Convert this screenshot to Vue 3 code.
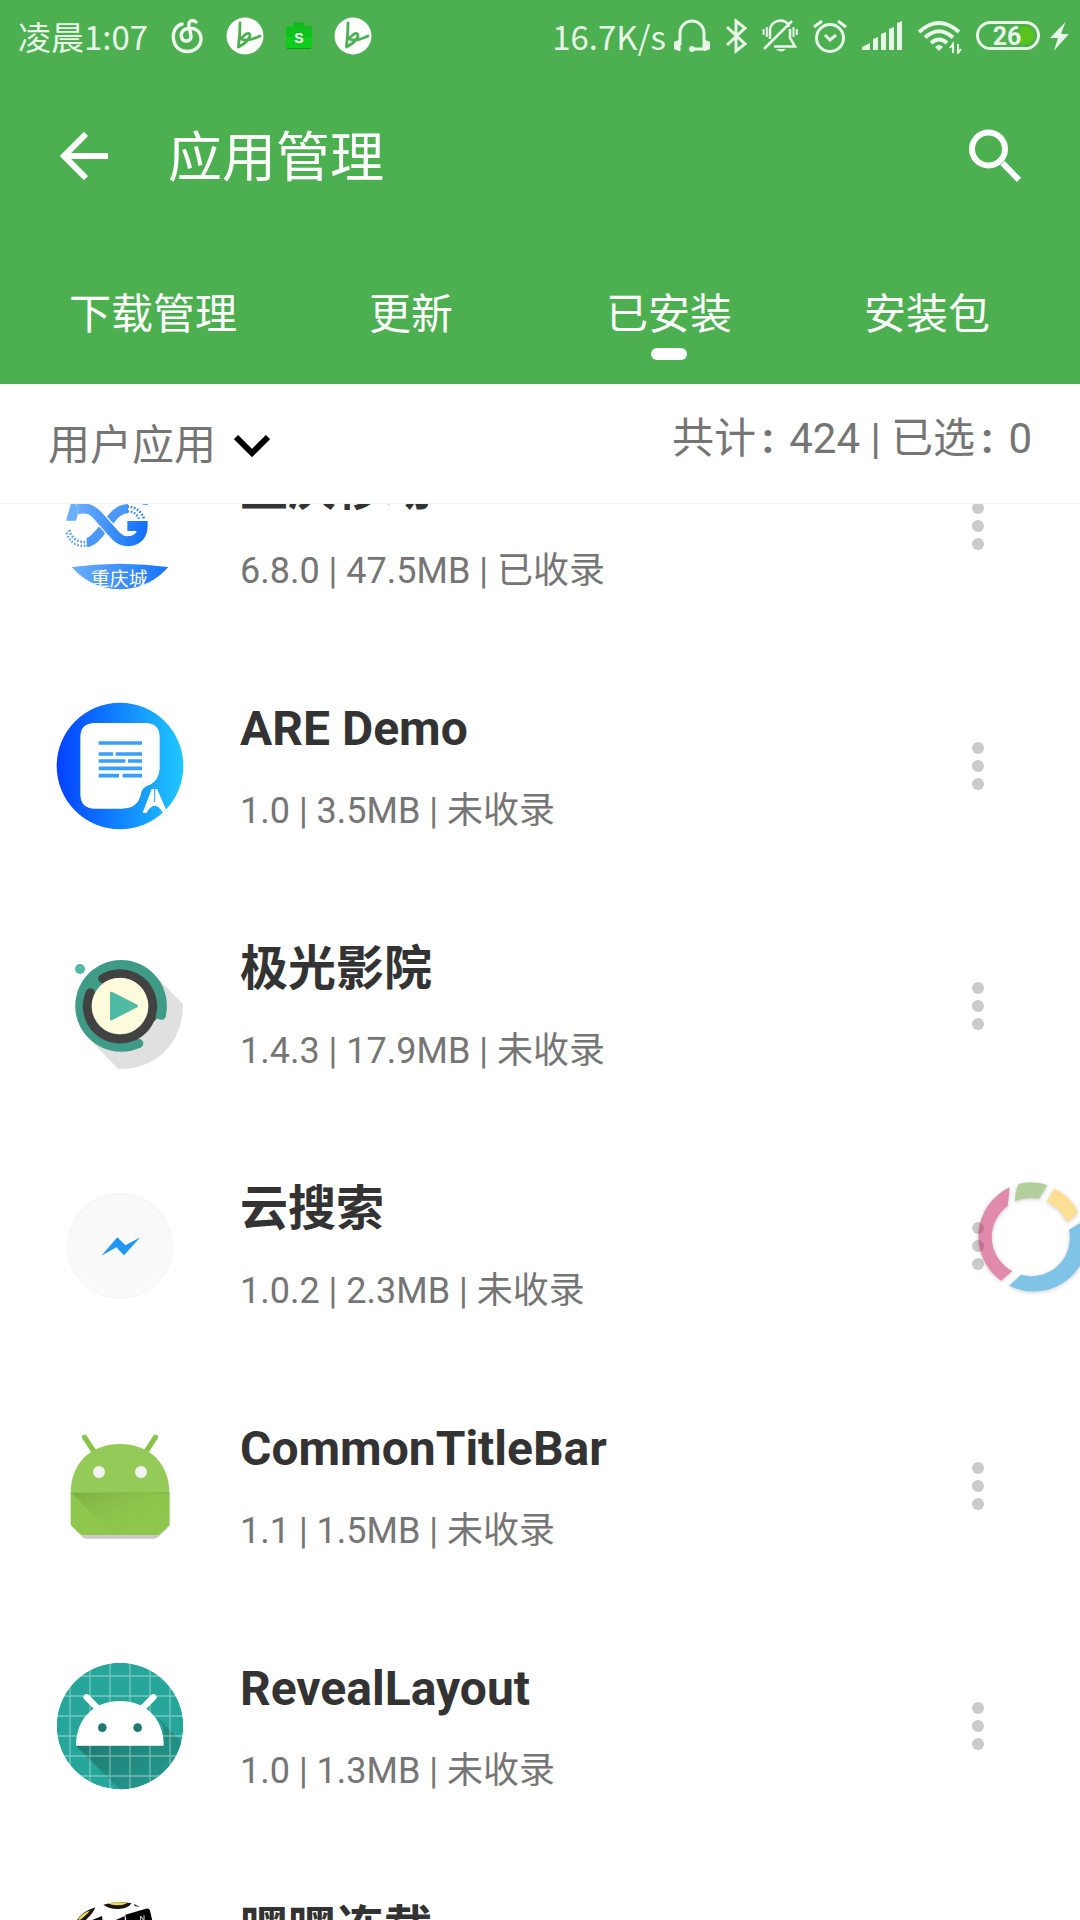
<script setup>
import { ref, onMounted } from 'vue'

const tabs = ['下载管理', '更新', '已安装', '安装包']
const active = ref(2)
const filter = ref('用户应用')
const list = ref(null)

const apps = [
  { id: 'cq', name: '重庆移动', meta: '6.8.0 | 47.5MB | 已收录' },
  { id: 'are', name: 'ARE Demo', meta: '1.0 | 3.5MB | 未收录' },
  { id: 'cinema', name: '极光影院', meta: '1.4.3 | 17.9MB | 未收录' },
  { id: 'search', name: '云搜索', meta: '1.0.2 | 2.3MB | 未收录' },
  { id: 'bar', name: 'CommonTitleBar', meta: '1.1 | 1.5MB | 未收录' },
  { id: 'reveal', name: 'RevealLayout', meta: '1.0 | 1.3MB | 未收录' },
  { id: 'comic', name: '嘿嘿连载', meta: '1.0 | 6.2MB | 未收录' },
]

// The list opens part-way through its first row.
onMounted(() => {
  list.value.scrollTop = 98
})
</script>

<template>
  <div class="page">
    <header class="header">
      <div class="status">
        <div class="status-side">
          <span class="clock">凌晨1:07</span>
          <svg width="34" height="36" viewBox="0 0 34 36" fill="none" stroke="#eef8ee" stroke-width="3.4" stroke-linecap="round">
            <path d="M12 6C5 8 2.500 15 3.500 21C4.500 29 10 33.500 17 33.500C25 33.500 31 28 31 21C31 13 25 9.500 18 10.500C13 11 10.500 15 11.500 19C13 25 21.500 24 21 18L19 8C18 3 22 1 26 4" />
          </svg>
          <svg width="38" height="38" viewBox="0 0 38 38">
            <circle cx="19" cy="19" r="18.500" fill="#fff" />
            <path d="M14 6Q14 18 12.500 29M12.500 30Q22 25 24 19Q24 15 20 17L13 23M15 22Q22 25 34 19" fill="none" stroke="#4caf50" stroke-width="2.800" stroke-linecap="round" stroke-linejoin="round" />
          </svg>
          <svg class="bag" width="26" height="28" viewBox="0 0 26 28">
            <path d="M9 5V2h8v3" fill="none" stroke="#10b81c" stroke-width="3" />
            <rect y="4" width="26" height="23" rx="2" fill="#10cc1c" />
            <rect y="4" width="26" height="11" rx="2" fill="#10c01c" />
            <rect x="1" y="26" width="24" height="1" fill="#0aa014" />
            <text x="13" y="21" text-anchor="middle" font-family="Liberation Sans, sans-serif" font-weight="700" font-size="14" fill="#fff">S</text>
          </svg>
          <svg width="38" height="38" viewBox="0 0 38 38">
            <circle cx="19" cy="19" r="18.500" fill="#fff" />
            <path d="M14 6Q14 18 12.500 29M12.500 30Q22 25 24 19Q24 15 20 17L13 23M15 22Q22 25 34 19" fill="none" stroke="#4caf50" stroke-width="2.800" stroke-linecap="round" stroke-linejoin="round" />
          </svg>
        </div>
        <div class="status-side right">
          <span class="speed">16.7K/s</span>
          <svg width="36" height="36" viewBox="0 0 36 36" fill="none" stroke="#e8f6e9" stroke-width="3">
            <path d="M6 27V15a12 12 0 0 1 24 0v16H18" />
            <path d="M5 22v11M31 22v11" stroke-width="3" />
            <rect x="0" y="23" width="6" height="9" rx="2" fill="#e8f6e9" stroke="none" />
            <rect x="30" y="23" width="6" height="9" rx="2" fill="#e8f6e9" stroke="none" />
            <circle cx="18" cy="31" r="3" fill="#e8f6e9" stroke="none" />
          </svg>
          <svg width="24" height="36" viewBox="0 0 24 36" fill="none" stroke="#e8f6e9" stroke-width="3">
            <path d="M3 9L21 26L12 33V3L21 10L3 27" />
          </svg>
          <svg width="36" height="36" viewBox="0 0 36 36" fill="none" stroke="#e8f6e9" stroke-width="2.600">
            <path d="M8 21V13C8 1 25 -1 27 9M28 11V20L33 28.500H12M2 31L30 3" />
            <path d="M1.500 11v6M4.800 9v10M31.500 9v10M34.800 11v6" stroke-width="2" />
            <path d="M14 31h10q-5 5-10 0z" fill="#e8f6e9" stroke="none" />
          </svg>
          <svg width="36" height="36" viewBox="0 0 36 36" fill="none" stroke="#e8f6e9" stroke-width="3">
            <circle cx="18" cy="20" r="13.500" />
            <path d="M13 17l5 5 6-5M2 9l8-6M26 3l8 6" />
          </svg>
          <svg width="40" height="36" viewBox="0 0 40 36" fill="#e8f6e9">
            <path d="M0 32v-3l8-4v7zM11 32V21l5-2v13zM19 32V16l5-2v18zM27 32V11l5-2v23zM35 32V5l5-2v29z" />
          </svg>
          <svg width="46" height="36" viewBox="0 0 46 36" fill="none" stroke="#e8f6e9" stroke-width="4">
            <path d="M3 14Q23-4 43 14M9 19.500Q23 7 37 19.500M15 25Q23 18 31 25" />
            <path d="M19 29q4-4 8 0l-4 4z" fill="#e8f6e9" stroke="none" />
            <path d="M37 35V26l-3 4M42 26v9l3-4" stroke-width="2" />
          </svg>
          <div class="power">
            <svg width="64" height="36" viewBox="0 0 64 36">
              <rect x="1.500" y="4.500" width="61" height="26" rx="13" fill="none" stroke="#e8f6e9" stroke-width="3" />
              <path d="M44 8.500h5a9 9 0 0 1 0 18h-5z" fill="#58c41a" />
              <text x="31" y="27" text-anchor="middle" font-family="Roboto, sans-serif" font-weight="700" font-size="25" fill="#e8f6e9">26</text>
            </svg>
            <svg width="20" height="36" viewBox="0 0 20 36" fill="#e8f6e9">
              <path d="M15.500 4L0 20h8L4 32.500L19 16h-8z" />
            </svg>
          </div>
        </div>
      </div>

      <div class="toolbar">
        <button class="icon-btn" aria-label="返回">
          <svg width="48" height="48" viewBox="0 0 48 48" fill="none" stroke="#fff" stroke-width="6">
            <path d="M26 2L4 24L26 46M4 24H48" />
          </svg>
        </button>
        <h1>应用管理</h1>
        <button class="icon-btn" aria-label="搜索">
          <svg width="52" height="54" viewBox="0 0 52 54" fill="none" stroke="#fff" stroke-width="6">
            <circle cx="19.500" cy="20" r="16.500" />
            <path d="M33.500 34L50 51" />
          </svg>
        </button>
      </div>

      <nav class="tabs">
        <button v-for="(t, i) in tabs" :key="t" :class="['tab', { active: i === active }]" @click="active = i">{{ t }}</button>
      </nav>
    </header>

    <div class="filter">
      <label class="picker">
        <select v-model="filter" aria-label="应用类型">
          <option>用户应用</option>
          <option>系统应用</option>
        </select>
        <svg width="36" height="24" viewBox="0 0 36 24" fill="none" stroke="#000" stroke-width="6">
          <path d="M2 3L18 19L34 3" />
        </svg>
      </label>
      <p class="stats">共计<span class="colon">:</span> 424 | 已选<span class="colon">:</span> 0</p>
    </div>

    <ul ref="list" class="list">
      <li v-for="app in apps" :key="app.id" class="row">
        <svg class="app-icon" viewBox="48 36 384 384">
          <template v-if="app.id === 'cq'">
            <defs>
              <linearGradient id="cqGrad"><stop offset="0" stop-color="#6aaefc" /><stop offset="1" stop-color="#1672fb" /></linearGradient>
              <clipPath id="cqClip"><circle cx="240" cy="228" r="190" /></clipPath>
            </defs>
            <path d="M96 150H142L134 182H116L108 212H78Z" fill="#6aaefc" />
            <g fill="none" stroke-width="30">
              <path d="M88 240C98 282 150 290 178 250" stroke="#5aa2fa" stroke-dasharray="5 5" stroke-width="8" />
              <path d="M80 248C94 296 146 300 178 262" stroke="#5aa2fa" stroke-dasharray="5 5" stroke-width="7" />
              <path d="M140 277C158 277 172 256 186 240L214 206C226 190 240 176 264 176" stroke="#4c98fa" stroke-width="28" />
              <path d="M262 170C286 170 306 184 312 208" stroke="#3a88fa" stroke-dasharray="5 5" stroke-width="8" />
              <path d="M262 184C280 184 292 192 298 210" stroke="#3a88fa" stroke-dasharray="5 5" stroke-width="7" />
              <path d="M112 178C146 170 160 182 176 200L226 256C252 286 308 278 308 226H262" stroke="#fff" stroke-width="38" />
              <path d="M112 178C146 170 160 182 176 200L226 256C252 286 308 278 308 228H262" stroke="url(#cqGrad)" />
            </g>
            <path d="M308 150h16v14h-16z" fill="#1672fb" />
            <g clip-path="url(#cqClip)">
              <path d="M90 352Q240 330 390 352V420H90Z" fill="url(#cqGrad)" />
              <text x="238" y="408" text-anchor="middle" font-size="57" font-family="Noto Sans CJK SC, sans-serif" fill="#fff">重庆城</text>
            </g>
          </template>

          <template v-else-if="app.id === 'are'">
            <defs>
              <linearGradient id="areGrad"><stop offset="0" stop-color="#0341ff" /><stop offset="1" stop-color="#20c8ff" /></linearGradient>
              <clipPath id="areClip"><circle cx="240" cy="228" r="190" /></clipPath>
            </defs>
            <circle cx="240" cy="228" r="190" fill="url(#areGrad)" />
            <path d="M165 99H316Q359 99 359 142V236Q356 272 330 284C306 292 304 304 302 316Q292 356 246 356H165Q121 356 121 312V142Q121 99 165 99Z" fill="#fff" />
            <path d="M176 159H306M176 192H219M227 192H306M176 213H256M264 213H306M176 235H306M176 257H237M248 257H306" fill="none" stroke="#389ff8" stroke-width="11" />
            <g clip-path="url(#areClip)">
              <path d="M335 297H351L380 362L368 368Q345 326 319 369L308 368Z" fill="#fff" />
              <path d="M344 297V336" stroke="#20a0ff" stroke-width="3" />
            </g>
          </template>

          <template v-else-if="app.id === 'cinema'">
            <path d="M356 148L429 222Q430 310 370 370Q310 420 235 417L160 340Z" fill="#e0e0e0" />
            <circle cx="120" cy="117" r="15" fill="#4fbba4" />
            <circle cx="240" cy="228" r="126" fill="#409b86" />
            <path d="M240 228L352 268L292 334Z" fill="#424242" />
            <path d="M364 256A124 124 0 1 0 296 340" fill="none" stroke="#409b86" stroke-width="27" stroke-linecap="round" />
            <path d="M350 266L372 268L330 330L306 334L292 324Z" fill="#e0e0e0" />
            <path d="M364 240V256M280 344L296 340" stroke="#409b86" stroke-width="27" stroke-linecap="round" />
            <path d="M188 146A98 98 0 1 1 151 188" fill="none" stroke="#424242" stroke-width="27" stroke-linecap="round" />
            <circle cx="240" cy="228" r="85" fill="#fffbdc" />
            <path d="M214 189L290 228L214 267Z" fill="#4fbba4" stroke="#4fbba4" stroke-width="8" stroke-linejoin="round" />
          </template>

          <template v-else-if="app.id === 'search'">
            <circle cx="240" cy="228" r="156" fill="#fafafa" stroke="#f5f5f5" stroke-width="4" />
            <path d="M184 257L232 202L256 226L301 202L252 256L229 232Z" fill="#2196f3" />
          </template>

          <template v-else-if="app.id === 'bar'">
            <defs>
              <linearGradient id="botShade" x1="0" y1="0" x2="1" y2="1"><stop offset="0" stop-color="#7cae42" /><stop offset="0.700" stop-color="#8bc34a" stop-opacity="0" /></linearGradient>
            </defs>
            <path d="M93 345L128 382Q130 386 140 386H340Q350 386 356 380L388 345Z" fill="#c9c9c9" />
            <path d="M134 82L166 131M346 82L314 131" stroke="#8bc34a" stroke-width="16" stroke-linecap="round" />
            <path d="M92 249C92 158 154 102 240 102S388 158 388 249Z" fill="#94ca58" />
            <path d="M92 249H389V345Q378 360 356 375H124Q108 362 92 345Z" fill="#8fc74e" />
            <path d="M94 249H387L387 330L340 375H220Z" fill="url(#botShade)" />
            <path d="M92 249H389" stroke="#7fb544" stroke-width="3" />
            <circle cx="177" cy="186" r="18" fill="#f3f3f3" />
            <circle cx="303" cy="186" r="18" fill="#f3f3f3" />
          </template>

          <template v-else-if="app.id === 'reveal'">
            <defs>
              <clipPath id="revClip"><circle cx="240" cy="228" r="190" /></clipPath>
              <linearGradient id="revShade" x1="0" y1="0" x2="1" y2="1"><stop offset="0" stop-color="#1c7168" /><stop offset="1" stop-color="#26a69a" /></linearGradient>
            </defs>
            <g clip-path="url(#revClip)">
              <circle cx="240" cy="228" r="190" fill="#26a69a" />
              <path d="M108 287H371V230L350 200L470 320V460H280Z" fill="url(#revShade)" />
              <path d="M90 30V430M150 30V430M210 30V430M270 30V430M330 30V430M390 30V430M40 78H440M40 138H440M40 198H440M40 258H440M40 318H440M40 378H440" stroke="#fff" stroke-opacity="0.380" stroke-width="4" />
            </g>
            <path d="M140 142L176 178M340 142L304 178" stroke="#fff" stroke-width="19" stroke-linecap="round" />
            <path d="M108 287C108 204 164 153 240 153S371 204 371 287Z" fill="#fff" />
            <circle cx="187" cy="233" r="13" fill="#21786f" />
            <circle cx="293" cy="233" r="13" fill="#21786f" />
          </template>

          <template v-else>
            <path d="M190 44Q232 32 275 40Q262 58 232 57Q208 57 190 44Z" fill="#1c140c" />
            <path d="M204 40Q232 34 264 38Q250 46 230 46Q214 46 204 40Z" fill="#ecd95c" />
            <path d="M110 92Q124 66 166 52Q160 72 126 100Z" fill="#1c140c" />
            <path d="M114 88Q126 68 150 62Q140 74 120 90Z" fill="#ecd95c" />
            <path d="M282 42L300 51L284 48Z" fill="#111" />
            <path d="M146 94L186 78L190 110H150ZM214 96L254 78L256 112H214Z" fill="#111" />
            <path d="M256 74L318 56Q328 54 330 62L346 130H266Z" fill="#000" />
            <path d="M302 92V78L312 92V76" stroke="#ddd" stroke-width="3" fill="none" />
          </template>
        </svg>

        <div class="info">
          <h2>{{ app.name }}</h2>
          <p>{{ app.meta }}</p>
        </div>

        <button class="more" aria-label="更多">
          <i></i><i></i><i></i>
        </button>
      </li>
    </ul>

    <svg class="ring" viewBox="115 64 330 330">
      <path d="M213 80A163 163 0 0 0 187 360L221 331A115 115 0 0 1 207 136Z" fill="#c2185b" />
      <path d="M240 70A163 163 0 0 1 326 73L301 115A115 115 0 0 0 229 122Q229 92 240 70Z" fill="#689f38" />
      <path d="M348 84A163 163 0 0 1 417 150Q408 172 385 184A115 115 0 0 0 323 123Z" fill="#fbc02d" />
      <path d="M212 375L247 342A115 115 0 0 0 391 207L440 178A163 163 0 0 1 212 375Z" fill="#0288d1" />
    </svg>
  </div>
</template>

<style>
body {
  margin: 0;
}
</style>

<style scoped>
.page {
  position: relative;
  display: flex;
  flex-direction: column;
  height: 100vh;
  overflow: hidden;
  background: #fff;
  font-family: Roboto, "Noto Sans CJK SC", sans-serif;
}

svg {
  display: block;
  flex: none;
}

button {
  padding: 0;
  border: 0;
  background: none;
  font: inherit;
  color: inherit;
}

h1,
h2,
p {
  margin: 0;
}

.header {
  flex: none;
  background: #4caf50;
  color: #fff;
}

.status {
  display: flex;
  justify-content: space-between;
  height: 72px;
  padding: 0 10px 0 18px;
  font-family: "Noto Sans CJK SC", sans-serif;
  font-size: 33px;
  line-height: 72px;
  color: #e8f6e9;
}

.status-side {
  display: flex;
  align-items: center;
  gap: 22px;
}

.status-side.right {
  gap: 14px;
}

.speed {
  margin-right: -6px;
}

.power {
  display: flex;
  gap: 10px;
}

.toolbar {
  display: flex;
  align-items: center;
  height: 168px;
  padding: 0 59px 0 60px;
}

.toolbar h1 {
  flex: 1;
  margin-left: 60px;
  padding-top: 6px;
  font-size: 54px;
  font-weight: 400;
  line-height: 72px;
}

.tabs {
  display: flex;
  height: 144px;
  padding: 0 24px;
}

.tab {
  position: relative;
  flex: 1;
  padding-bottom: 4px;
  font-size: 42px;
}

.tab.active::after {
  content: "";
  position: absolute;
  left: 50%;
  bottom: 24px;
  width: 36px;
  height: 12px;
  margin-left: -18px;
  border-radius: 6px;
  background: #fff;
}

.filter {
  display: flex;
  flex: none;
  justify-content: space-between;
  height: 119px;
  padding: 0 48px;
  border-bottom: 1px solid #f2f2f2;
  font-size: 42px;
  color: #757575;
}

.picker {
  display: flex;
  align-items: center;
  gap: 17px;
  padding-top: 4px;
}

.picker select {
  appearance: none;
  padding: 0;
  border: 0;
  background: none;
  font: inherit;
  color: inherit;
}

.stats {
  line-height: 110px;
}

.colon {
  padding: 0 5px 0 6px;
  font-weight: 700;
}

.list {
  flex: 1;
  min-height: 0;
  margin: 0;
  padding: 0;
  overflow-y: auto;
  scrollbar-width: none;
  list-style: none;
}

.row {
  display: flex;
  align-items: center;
  height: 240px;
  padding: 0 72px 0 56px;
}

.app-icon {
  width: 128px;
  height: 128px;
}

.info {
  flex: 1;
  margin-left: 56px;
}

.info h2 {
  font-size: 48px;
  font-weight: 700;
  line-height: 64px;
  color: #333;
}

.info p {
  margin-top: 26px;
  font-size: 36px;
  line-height: 48px;
  color: #757575;
}

.more {
  display: flex;
  flex-direction: column;
  align-items: center;
  gap: 6px;
  width: 60px;
}

.more i {
  width: 12px;
  height: 12px;
  border-radius: 50%;
  background: #cbcbcb;
}

.ring {
  position: absolute;
  top: 1182px;
  right: -7px;
  width: 110px;
  height: 110px;
  opacity: 0.5;
  filter: drop-shadow(0 1px 2px rgba(0, 0, 0, 0.4));
}
</style>
